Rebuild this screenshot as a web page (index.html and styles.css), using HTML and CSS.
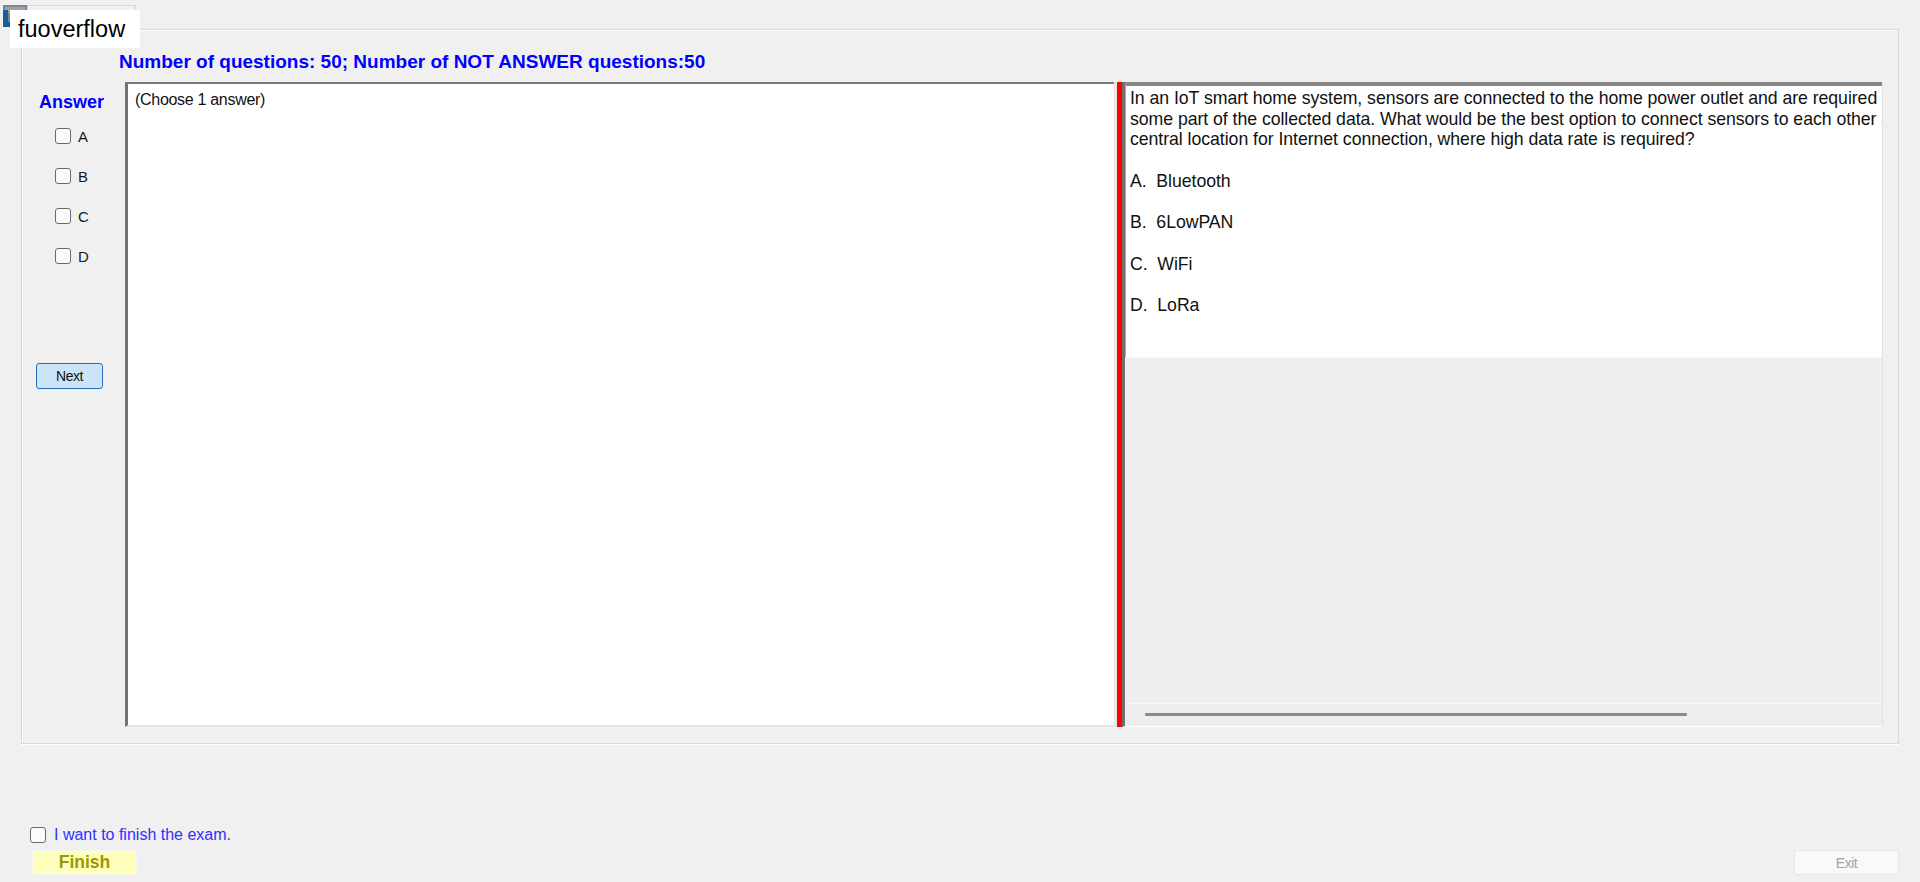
FILE: index.html
```html
<!DOCTYPE html>
<html lang="en">
<head>
  <meta charset="UTF-8" />
  <title>Exam</title>
  <link rel="stylesheet" href="styles.css">
</head>
<body>

<div class="app-icon">
  <svg width="30" height="30" viewBox="0 0 30 30">
    <rect x="3" y="5" width="24" height="22" fill="#7b8691"/>
    <rect x="5" y="7" width="20" height="6" fill="#9aa4ad"/>
    <path d="M3 10 H8 V22 H27 V27 H3 Z" fill="#1d5c9c"/>
  </svg>
</div>
<div class="title-ghost"></div>
<div class="brand">fuoverflow</div>

<div class="group">
  <div class="summary">Number of questions: 50; Number of NOT ANSWER questions:50</div>

  <div class="main">
    <div class="answer-col">
      <div class="answer-title">Answer</div>
      <div class="options">
        <label class="option"><input type="checkbox"><span>A</span></label>
        <label class="option"><input type="checkbox"><span>B</span></label>
        <label class="option"><input type="checkbox"><span>C</span></label>
        <label class="option"><input type="checkbox"><span>D</span></label>
      </div>
      <button class="next-btn">Next</button>
    </div>

    <div class="answer-view">(Choose 1 answer)</div>

    <div class="splitter"></div>

    <div class="question">
      <div class="rtb">In an IoT smart home system, sensors are connected to the home power outlet and are required to send
some part of the collected data. What would be the best option to connect sensors to each other and to a
central location for Internet connection, where high data rate is required?

A.  Bluetooth

B.  6LowPAN

C.  WiFi

D.  LoRa</div>
      <div class="rtb-rest"></div>
      <div class="hscroll"><div class="thumb"></div></div>
    </div>
  </div>
</div>

<div class="footer">
  <div class="finish-box">
    <label class="confirm"><input type="checkbox"><span>I want to finish the exam.</span></label>
    <button class="finish-btn">Finish</button>
  </div>
  <button class="exit-btn">Exit</button>
</div>

</body>
</html>
```

FILE: styles.css
```css
* {
  margin: 0;
  padding: 0;
  box-sizing: border-box;
}

body {
  width: 1920px;
  height: 882px;
  overflow: hidden;
  background: #f0f0f0;
  font-family: "Liberation Sans", Arial, sans-serif;
  color: #111;
}

/* window title bits in the top-left corner */
.app-icon {
  position: absolute;
  left: 0;
  top: 0;
}

.title-ghost {
  position: absolute;
  left: 27px;
  top: 5px;
  width: 109px;
  height: 28px;
  border: 1px solid #d8d8d8;
}

.brand {
  position: absolute;
  left: 10px;
  top: 10px;
  width: 130px;
  height: 38px;
  padding-left: 8px;
  background: #fff;
  font-size: 23.5px;
  line-height: 38px;
  color: #000;
}

/* main group box */
.group {
  width: 1878px;
  height: 715px;
  margin: 29px 0 0 21px;
  border: 1px solid #d9d9d9;
  box-shadow: inset 1px 1px 0 #fff, 0 1px 0 #fff;
}

.summary {
  padding: 21px 0 9px 97px;
  font-size: 19px;
  line-height: 22px;
  font-weight: bold;
  color: #0000ff;
}

.main {
  display: flex;
  height: 645px;
}

.answer-col {
  width: 103px;
  display: flex;
  flex-direction: column;
  align-items: flex-start;
}

.answer-title {
  margin: 10px 0 0 17px;
  font-size: 18px;
  line-height: 20px;
  font-weight: bold;
  color: #0000ff;
}

.options {
  margin-top: 4px;
}

.option {
  height: 40px;
  padding-left: 33px;
  display: flex;
  align-items: center;
  gap: 7px;
  font-size: 15px;
  color: #1a1a1a;
}

input[type="checkbox"] {
  appearance: none;
  width: 16px;
  height: 16px;
  border: 1.5px solid #6a6a6a;
  border-radius: 3px;
  background: #fbfbfb;
  margin: 0;
}

.next-btn {
  margin: 87px 0 0 14px;
  width: 67px;
  height: 26px;
  background: #cce4f7;
  border: 1px solid #2a70b8;
  border-radius: 3px;
  font-family: inherit;
  font-size: 14px;
  letter-spacing: -0.5px;
  color: #111;
}

.answer-view {
  width: 989px;
  height: 645px;
  padding: 6px 0 0 7px;
  background: #fff;
  border-left: 3px solid #737373;
  border-top: 2px solid #7a7a7a;
  border-bottom: 2px solid #e4e4e4;
  font-size: 16px;
  letter-spacing: -0.3px;
  line-height: 20px;
}

.splitter {
  width: 8px;
  background: #ff0000;
  border-left: 3px solid #e8e8e8;
}

.question {
  width: 761px;
  display: flex;
  flex-direction: column;
  border-left: 3px solid #707070;
  border-right: 1px solid #e2e2e2;
  border-bottom: 1px solid #fff;
}

.rtb {
  height: 275px;
  padding: 2px 0 0 4px;
  background: #fff;
  border-top: 4px solid #858585;
  border-left: 1px solid #a8a8a8;
  overflow: hidden;
  white-space: pre;
  font-size: 17.7px;
  letter-spacing: -0.05px;
  line-height: 20.7px;
  color: #111;
}

.rtb-rest {
  flex: 1;
  background: #efefef;
  border-top: 1px solid #f8f8f8;
}

.hscroll {
  height: 23px;
  background: #eeeeee;
  border-top: 1px solid #f8f8f8;
}

.thumb {
  width: 542px;
  height: 3px;
  margin: 9px 0 0 20px;
  background: #8a8a8a;
  border-radius: 1px;
}

/* bottom bar */
.footer {
  display: flex;
  justify-content: space-between;
  align-items: flex-end;
  padding: 82px 21px 0 30px;
}

.finish-box {
  display: flex;
  flex-direction: column;
  align-items: flex-start;
}

.confirm {
  display: flex;
  align-items: center;
  gap: 8px;
  font-size: 16px;
  color: #3030ff;
}

.finish-btn {
  margin: 6px 0 0 2px;
  width: 105px;
  height: 25px;
  background: #ffffbd;
  border: 1px solid #f6f6f0;
  border-radius: 3px;
  font-family: inherit;
  font-size: 17.5px;
  font-weight: bold;
  color: #9c9800;
}

.exit-btn {
  width: 105px;
  height: 25px;
  background: #f9f9f9;
  border: 1px solid #e6e6e6;
  border-radius: 4px;
  font-family: inherit;
  font-size: 14px;
  letter-spacing: -0.5px;
  color: #a3a3a3;
}
```
